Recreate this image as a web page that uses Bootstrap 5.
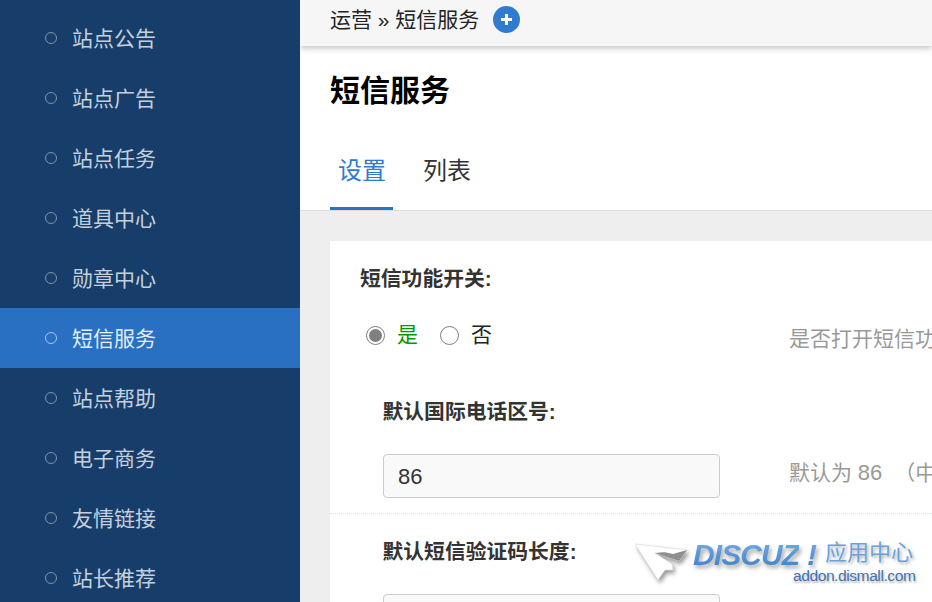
<!DOCTYPE html>
<html lang="zh"><head><meta charset="utf-8"><title>短信服务</title>
<link rel="stylesheet" href="https://cdn.jsdelivr.net/npm/bootstrap@5.3.0/dist/css/bootstrap.min.css">
<style>
html,body{height:602px;overflow:hidden}
body{font-family:"Liberation Sans","Noto Sans CJK SC",sans-serif;background:#eee;color:#333}
.shell{width:932px;height:602px;overflow:hidden;position:relative}
.side{width:300px;flex:none;background:#173e6a;padding-top:8px}
.side-item{height:60px;padding:0 0 0 45px;gap:15px;color:#c6d0dc;font-size:21px}
.side-item.on{background:#2a70c2;color:#e4edf8}
.side-txt{padding-top:1px}
.dot{width:12px;height:12px;border:1.5px solid #8094ab;border-radius:50%;flex:none}
.on .dot{border-color:#a9c8ec}
.main{width:632px;flex:none;overflow:hidden}
.crumb{height:46px;background:#f6f6f6;padding:0 30px 6px;font-size:21px;color:#222;box-shadow:0 2px 6px rgba(0,0,0,.25);position:relative;white-space:nowrap}
.plus{width:27px;height:27px;margin:0 0 2px 14px;flex:none;display:block}
.head{background:#fff;height:165px;border-bottom:1px solid #ddd;padding:0 30px}
.ttl{font-size:30px;font-weight:700;color:#000;line-height:40px;margin:0;padding-top:25px;height:96px}
.tab-row{height:68px}
.tabx{font-size:24px;color:#333;line-height:30px;padding:14px 7px 0 8px;height:68px}
.tabx.on{color:#2e7bd0;border-bottom:3px solid #2a72c4}
.tabx+.tabx{margin-left:22px}
.panel{background:#fff;margin:30px 0 0 30px;width:602px;height:400px;white-space:nowrap;overflow:hidden;position:relative}
.lbl{font-size:20.8px;font-weight:700;color:#333;line-height:24px;margin:0}
.l0{padding:26px 0 0 30px}
.radios{height:32px;margin-top:28px;padding-left:36px;font-size:21px}
.rad{width:19px;height:19px;border:1.5px solid #808080;border-radius:50%;flex:none;background:#fff}
.rad.sel{padding:2px;background:#808080;background-clip:content-box}
.yes{color:#090;margin:0 22px 0 12px}
.no{color:#222;margin-left:12px}
.tip{font-size:21px;color:#999;position:absolute;left:459px;line-height:28px}
.tip1{top:84px}
.tip2{top:218px}
.num{font-size:22px}
.gapx{margin-left:6px}
.fld{width:337px;height:44px;background:#f9f9f9;border:1px solid #ccc;border-radius:4px;padding:0 14px;font-size:22px;color:#333;display:flex;align-items:center;margin:30px 0 0 53px}
.l1{padding-left:52.500px}
.l1a{margin-top:49px}
.l1b{margin-top:26px}
.sep{border-bottom:1px dotted #d5e5ee;height:1px;margin-top:15px}
.wm{position:absolute;left:635px;top:541px;width:285px;height:45px;pointer-events:none}
.wm svg{position:absolute;left:0;top:2px}
.wm-d,.wm-x{position:absolute;top:-1px;font-size:30px;font-weight:700;font-style:italic;line-height:30px;background:linear-gradient(#74ace6,#3f7fc4);-webkit-background-clip:text;background-clip:text;color:transparent;filter:drop-shadow(2px 3px 2px rgba(0,0,0,.35))}
.wm-d{left:58px;letter-spacing:-.9px}
.wm-x{left:172px}
.wm-c{position:absolute;left:190px;top:-2px;font-size:22px;color:#6aa3dc;text-shadow:2px 2px 3px rgba(0,0,0,.3);line-height:28px;white-space:nowrap}
.wm-u{position:absolute;left:158px;top:25px;font-size:15.5px;color:#3f74ae;text-shadow:1px 2px 2px rgba(0,0,0,.3);line-height:20px;letter-spacing:-.4px}
.wing{fill:#fff;stroke:#ddd;stroke-width:.7;stroke-linejoin:round;filter:drop-shadow(2px 3px 2px rgba(0,0,0,.4))}
</style></head>
<body>
<div class="shell d-flex">
  <nav class="side">
    <div class="side-item d-flex align-items-center"><span class="dot"></span><span class="side-txt">站点公告</span></div>
    <div class="side-item d-flex align-items-center"><span class="dot"></span><span class="side-txt">站点广告</span></div>
    <div class="side-item d-flex align-items-center"><span class="dot"></span><span class="side-txt">站点任务</span></div>
    <div class="side-item d-flex align-items-center"><span class="dot"></span><span class="side-txt">道具中心</span></div>
    <div class="side-item d-flex align-items-center"><span class="dot"></span><span class="side-txt">勋章中心</span></div>
    <div class="side-item on d-flex align-items-center"><span class="dot"></span><span class="side-txt">短信服务</span></div>
    <div class="side-item d-flex align-items-center"><span class="dot"></span><span class="side-txt">站点帮助</span></div>
    <div class="side-item d-flex align-items-center"><span class="dot"></span><span class="side-txt">电子商务</span></div>
    <div class="side-item d-flex align-items-center"><span class="dot"></span><span class="side-txt">友情链接</span></div>
    <div class="side-item d-flex align-items-center"><span class="dot"></span><span class="side-txt">站长推荐</span></div>
  </nav>
  <main class="main">
    <div class="crumb d-flex align-items-center">运营 » 短信服务
      <svg class="plus" viewBox="0 0 27 27"><circle cx="13.5" cy="13.5" r="13.5" fill="#2e7bd0"/><path d="M13.5 8v11M8 13.500h11" stroke="#fff" stroke-width="3"/></svg>
    </div>
    <div class="head">
      <h1 class="ttl">短信服务</h1>
      <div class="tab-row d-flex">
        <div class="tabx on">设置</div>
        <div class="tabx">列表</div>
      </div>
    </div>
    <div class="panel">
      <div class="l0"><p class="lbl">短信功能开关:</p></div>
      <div class="radios d-flex align-items-center">
        <span class="rad sel"></span><span class="yes">是</span>
        <span class="rad"></span><span class="no">否</span>
      </div>
      <span class="tip tip1">是否打开短信功能</span>
      <div class="l1 l1a"><p class="lbl">默认国际电话区号:</p></div>
      <div class="fld">86</div>
      <span class="tip tip2">默认为 <span class="num">86</span> <span class="gapx">（中国）</span></span>
      <div class="sep"></div>
      <div class="l1 l1b"><p class="lbl">默认短信验证码长度:</p></div>
      <div class="fld"></div>
    </div>
  </main>
  <div class="wm">
    <svg width="58" height="44" viewBox="0 0 58 44"><path class="wing" d="M0 1 52 7 44 18 20 10 37 21 38 27 30 27 23 37Z"/><path d="M20 10 52 7 44 18Z" fill="#8f8f8f"/><path d="M20 7 52 7 38 11Z" fill="#fff"/></svg>
    <span class="wm-d">DISCUZ</span><span class="wm-x">!</span>
    <span class="wm-c">应用中心</span>
    <span class="wm-u">addon.dismall.com</span>
  </div>
</div>
</body></html>
